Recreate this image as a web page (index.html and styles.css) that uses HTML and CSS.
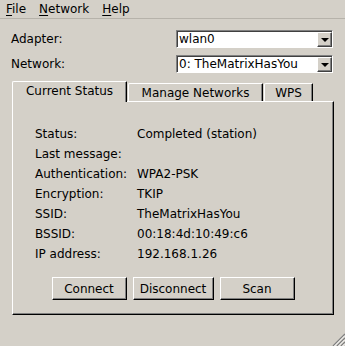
FILE: index.html
```html
<!DOCTYPE html>
<html lang="en">
<head>
    <meta charset="UTF-8">
    <title>wpa_gui</title>
    <link rel="stylesheet" href="styles.css">
</head>
<body>
    <div class="menubar">
        <span class="menu-item"><u>F</u>ile</span>
        <span class="menu-item"><u>N</u>etwork</span>
        <span class="menu-item"><u>H</u>elp</span>
    </div>

    <div class="form">
        <div class="form-row">
            <span>Adapter:</span>
            <div class="combo">
                <span class="combo-text">wlan0</span>
                <span class="combo-arrow"><span class="triangle"></span></span>
            </div>
        </div>
        <div class="form-row">
            <span>Network:</span>
            <div class="combo">
                <span class="combo-text">0: TheMatrixHasYou</span>
                <span class="combo-arrow"><span class="triangle"></span></span>
            </div>
        </div>
    </div>

    <div class="tabs">
        <div class="tab-bar">
            <div class="tab tab-current">Current Status</div>
            <div class="tab tab-manage">Manage Networks</div>
            <div class="tab tab-wps">WPS</div>
        </div>
        <div class="pane">
            <div class="status-grid">
                <span>Status:</span><span>Completed (station)</span>
                <span>Last message:</span><span></span>
                <span>Authentication:</span><span>WPA2-PSK</span>
                <span>Encryption:</span><span>TKIP</span>
                <span>SSID:</span><span>TheMatrixHasYou</span>
                <span>BSSID:</span><span>00:18:4d:10:49:c6</span>
                <span>IP address:</span><span>192.168.1.26</span>
            </div>
            <div class="button-row">
                <button class="button btn-connect">Connect</button>
                <button class="button btn-disconnect">Disconnect</button>
                <button class="button btn-scan">Scan</button>
            </div>
        </div>
    </div>

    <!-- size grip in the window corner -->
    <svg class="size-grip" width="13" height="13" viewBox="0 0 13 13">
        <path d="M13 1 L1 13 M13 5 L5 13 M13 9 L9 13" stroke="#808080" stroke-width="1.4"/>
        <path d="M13 2.5 L2.5 13 M13 6.5 L6.5 13 M13 10.5 L10.5 13" stroke="#ffffff" stroke-width="1"/>
    </svg>
</body>
</html>
```

FILE: styles.css
```css
body {
    margin: 0;
    width: 345px;
    height: 346px;
    overflow: hidden;
    position: relative;
    background-color: #d4d0c8;
    color: #000;
    font-family: "DejaVu Sans", sans-serif;
    font-size: 12px;
}

/* Menu bar */
.menubar {
    display: flex;
    gap: 13px;
    height: 19px;
    line-height: 18px;
    padding-left: 6px;
    border-bottom: 1px solid #b6b2aa;
    box-sizing: border-box;
}

.menu-item u {
    text-decoration-thickness: 1px;
    text-underline-offset: 2px;
}

/* Adapter / network selectors */
.form {
    display: flex;
    flex-direction: column;
    gap: 7px;
    padding: 11px 12px 0 11px;
}

.form-row {
    display: flex;
    justify-content: space-between;
    align-items: center;
    height: 18px;
}

.combo {
    display: flex;
    align-items: center;
    width: 157px;
    height: 18px;
    box-sizing: border-box;
    background-color: #fff;
    border-top: 1px solid #808080;
    border-left: 1px solid #808080;
    border-right: 1px solid #ffffff;
    border-bottom: 1px solid #ffffff;
    box-shadow: inset 1px 1px 0 #404040;
}

.combo-text {
    flex: 1;
    padding-left: 2px;
    line-height: 16px;
    white-space: nowrap;
}

.combo-arrow {
    display: flex;
    align-items: center;
    justify-content: center;
    width: 15px;
    height: 15px;
    margin-top: 1px;
    box-sizing: border-box;
    background-color: #d4d0c8;
    border-top: 1px solid #ffffff;
    border-left: 1px solid #ffffff;
    border-right: 1px solid #404040;
    border-bottom: 1px solid #404040;
    box-shadow: inset -1px -1px 0 #808080;
}

.triangle {
    width: 0;
    height: 0;
    margin-top: 1px;
    border-left: 4px solid transparent;
    border-right: 4px solid transparent;
    border-top: 4px solid #000;
}

/* Tab widget */
.tabs {
    margin: 8px 11px 0 12px;
}

.tab-bar {
    display: flex;
    align-items: flex-end;
    height: 20px;
}

.tab {
    height: 18px;
    line-height: 18px;
    text-align: center;
    box-sizing: border-box;
    border-top: 1px solid #ffffff;
    border-left: 1px solid #ffffff;
    border-right: 1px solid #000;
    box-shadow: inset -1px 0 0 #808080;
    border-top-left-radius: 2px;
    border-top-right-radius: 1px;
}

.tab-current {
    position: relative;
    width: 115px;
    height: 21px;
    line-height: 19px;
    margin-bottom: -1px;
    background-color: #d4d0c8;
}

.tab-manage {
    width: 135px;
    margin-left: 1px;
}

.tab-wps {
    width: 49px;
    margin-left: 1px;
}

.pane {
    height: 214px;
    box-sizing: border-box;
    border-top: 1px solid #ffffff;
    border-left: 1px solid #ffffff;
    border-right: 1px solid #000;
    border-bottom: 1px solid #000;
    box-shadow: inset -1px -1px 0 #808080;
    padding: 22px 0 0 22px;
}

.status-grid {
    display: grid;
    grid-template-columns: 102px 1fr;
    grid-auto-rows: 20px;
    line-height: 20px;
    white-space: nowrap;
}

.button-row {
    display: flex;
    justify-content: center;
    gap: 6px;
    margin: 13px 0 0 -22px;
}

.button {
    height: 23px;
    padding: 0;
    box-sizing: border-box;
    font-family: "DejaVu Sans", sans-serif;
    font-size: 12px;
    color: #000;
    background-color: #d4d0c8;
    border-top: 1px solid #ffffff;
    border-left: 1px solid #ffffff;
    border-right: 1px solid #000;
    border-bottom: 1px solid #000;
    box-shadow: inset -1px -1px 0 #808080;
}

.btn-connect {
    width: 75px;
}

.btn-disconnect {
    width: 81px;
}

.btn-scan {
    width: 75px;
}

.size-grip {
    position: absolute;
    right: 0;
    bottom: 0;
}
```
